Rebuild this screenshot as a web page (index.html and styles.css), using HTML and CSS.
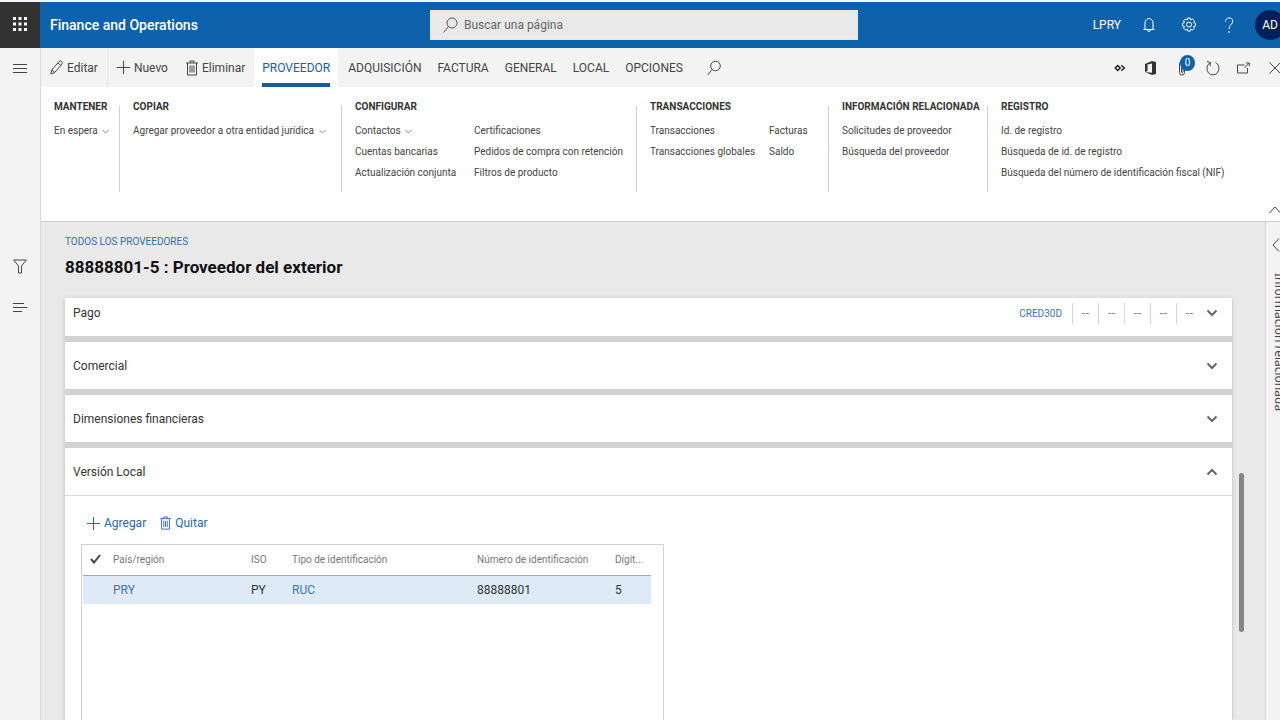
FILE: index.html
```html
<!DOCTYPE html>
<html lang="es">
<head>
    <meta charset="UTF-8">
    <title>Finance and Operations</title>
    <link rel="stylesheet" href="styles.css">
</head>
<body>
<header class="topbar">
    <button class="launcher" aria-label="Aplicaciones">
        <svg width="14" height="14" viewBox="0 0 14 14" fill="#fff"><path d="M0 0h3v3H0zM5.500 0h3v3h-3zM11 0h3v3h-3zM0 5.500h3v3H0zM5.500 5.500h3v3h-3zM11 5.500h3v3h-3zM0 11h3v3H0zM5.500 11h3v3h-3zM11 11h3v3h-3z"/></svg>
    </button>
    <div class="brand">Finance and Operations</div>
    <label class="search">
        <svg class="icon" width="15" height="16" viewBox="0 0 15 16"><circle cx="9" cy="6" r="5"/><path d="M5.500 9.500L.7 15.300"/></svg>
        <input type="text" placeholder="Buscar una página" aria-label="Buscar una página">
    </label>
    <div class="account">
        <span class="company">LPRY</span>
        <button class="top-button" aria-label="Notificaciones">
            <svg class="icon" width="14" height="16" viewBox="0 0 14 16"><path d="M1.500 12.500h11M3 12.500V6a4 4.500 0 0 1 8 0v6.500M5.500 12.500a1.500 2 0 0 0 3 0"/></svg>
        </button>
        <button class="top-button" aria-label="Configuración">
            <svg class="icon" width="16" height="16" viewBox="0 0 16 16"><path d="M6.700 1h2.600l.5 2 1.800-1 1.900 1.900-1 1.700 2 .6v2.700l-2 .5 1 1.800-1.900 1.900-1.800-1-.5 2H6.700l-.5-2-1.800 1-1.900-1.900 1-1.800-2-.5V6.200l2-.6-1-1.700L4.400 2l1.800 1z"/><circle cx="8" cy="7.600" r="2.500"/></svg>
        </button>
        <button class="top-button" aria-label="Ayuda">
            <svg class="icon" width="10" height="17" viewBox="0 0 10 17"><path d="M1.500 4.500C1.500-.3 8.700-.3 8.700 4.300 8.700 7.500 5 7.700 5 12M5 14v2"/></svg>
        </button>
        <button class="avatar">AD</button>
    </div>
</header>

<div class="workspace">
    <nav class="side-nav">
        <button aria-label="Menú"><svg class="icon" width="14" height="10" viewBox="0 0 14 10"><path d="M0 .5h14M0 4.500h14M0 8.500h14"/></svg></button>
        <button class="nav-filter" aria-label="Filtro"><svg class="icon" width="14" height="15" viewBox="0 0 14 15"><path d="M.7 1h12.600L8.500 7v7h-3V7z"/></svg></button>
        <button aria-label="Lista"><svg class="icon" width="14" height="10" viewBox="0 0 14 10"><path d="M0 .5h11M0 4.500h14M0 8.500h9"/></svg></button>
    </nav>

    <main class="main">
        <div class="action-bar">
            <button class="command edit"><svg class="icon" width="13" height="15" viewBox="0 0 13 15"><path d="M.8 14l1-4L9 1.500Q10.500.3 11.700 1.500T12 4L4.700 12.500zM1.800 10l2.900 2.500M8 3l2.900 2.500"/></svg>Editar</button>
            <button class="command"><svg class="icon" width="13" height="13" viewBox="0 0 13 13"><path d="M6.500 0v13M0 6.500h13"/></svg>Nuevo</button>
            <button class="command"><svg class="icon" width="12" height="16" viewBox="0 0 12 16"><path d="M0 3h12M4 3V1h4v2M1.500 3v12h9V3M4 5.500v7M6 5.500v7M8 5.500v7"/></svg>Eliminar</button>
            <div class="tabs">
                <button class="tab active"><span>PROVEEDOR</span></button>
                <button class="tab">ADQUISICIÓN</button>
                <button class="tab">FACTURA</button>
                <button class="tab">GENERAL</button>
                <button class="tab">LOCAL</button>
                <button class="tab">OPCIONES</button>
                <button class="tab find" aria-label="Buscar"><svg class="icon" width="14" height="16" viewBox="0 0 14 16"><circle cx="8.500" cy="6" r="4.800"/><path d="M5.200 9.500L.7 15"/></svg></button>
            </div>
            <div class="page-tools">
                <button aria-label="Power Apps"><svg class="icon apps" width="12" height="8" viewBox="0 0 12 8"><path d="M3.700 1.500L6.200 4 3.700 6.500 1.200 4zM7.300 1.200L10.300 4 7.300 6.800"/></svg></button>
                <button aria-label="Office"><svg width="11" height="14" viewBox="0 0 11 14" fill="#333"><path d="M0 3l7-3 4 1v12l-4 1-7-3 7 .8V2.400L2.500 3.500V10L0 11z"/></svg></button>
                <button class="attach" aria-label="Datos adjuntos"><svg class="icon" width="8" height="16" viewBox="0 0 8 16"><path d="M6.500 4v8.500a2.500 2.500 0 0 1-5 0v-9a1.500 1.500 0 0 1 3.500 0v8.500q-1 1.500-1.500 0V5"/></svg><span class="badge">0</span></button>
                <button aria-label="Actualizar"><svg class="icon" width="14" height="16" viewBox="0 0 14 16"><path d="M9.500 2.500A6 6.500 0 1 1 4 2.700M1 1.500l3.500 1L4 6"/></svg></button>
                <button aria-label="Abrir en ventana nueva"><svg class="icon" width="13" height="12" viewBox="0 0 13 12"><path d="M7.500 3H.5v8h10V6M7.500 6L12 1.200M9 1h3.300v3.300"/></svg></button>
                <button aria-label="Cerrar"><svg class="icon" width="12" height="12" viewBox="0 0 12 12"><path d="M.5.5l11 11M11.500.5l-11 11"/></svg></button>
            </div>
        </div>

        <div class="ribbon">
            <section class="group">
                <h2>MANTENER</h2>
                <a href="#">En espera <svg class="icon caret" width="7" height="5" viewBox="0 0 7 5"><path d="M.5 1l3 3 3-3"/></svg></a>
            </section>
            <section class="group">
                <h2>COPIAR</h2>
                <a href="#">Agregar proveedor a otra entidad jurídica <svg class="icon caret" width="7" height="5" viewBox="0 0 7 5"><path d="M.5 1l3 3 3-3"/></svg></a>
            </section>
            <section class="group two-columns">
                <h2>CONFIGURAR</h2>
                <a href="#">Contactos <svg class="icon caret" width="7" height="5" viewBox="0 0 7 5"><path d="M.5 1l3 3 3-3"/></svg></a>
                <a href="#">Certificaciones</a>
                <a href="#">Cuentas bancarias</a>
                <a href="#">Pedidos de compra con retención</a>
                <a href="#">Actualización conjunta</a>
                <a href="#">Filtros de producto</a>
            </section>
            <section class="group two-columns">
                <h2>TRANSACCIONES</h2>
                <a href="#">Transacciones</a>
                <a href="#">Facturas</a>
                <a href="#">Transacciones globales</a>
                <a href="#">Saldo</a>
            </section>
            <section class="group">
                <h2>INFORMACIÓN RELACIONADA</h2>
                <a href="#">Solicitudes de proveedor</a>
                <a href="#">Búsqueda del proveedor</a>
            </section>
            <section class="group">
                <h2>REGISTRO</h2>
                <a href="#">Id. de registro</a>
                <a href="#">Búsqueda de id. de registro</a>
                <a href="#">Búsqueda del número de identificación fiscal (NIF)</a>
            </section>
            <button class="collapse" aria-label="Contraer"><svg class="icon" width="12" height="8" viewBox="0 0 12 8"><path d="M.5 7L6 1l5.500 6"/></svg></button>
        </div>

        <div class="page">
            <div class="record">
                <a class="breadcrumb" href="#">TODOS LOS PROVEEDORES</a>
                <h1>88888801-5 : Proveedor del exterior</h1>

                <div class="sections">
                    <section class="card">
                        <button class="card-header first">
                            <span>Pago</span>
                            <span class="summary"><b>CRED30D</b><i>--</i><i>--</i><i>--</i><i>--</i><i>--</i></span>
                            <svg class="icon chevron" width="12" height="8" viewBox="0 0 12 8"><path d="M1.500 1.500L6 6l4.500-4.500"/></svg>
                        </button>
                    </section>
                    <section class="card">
                        <button class="card-header">
                            <span>Comercial</span>
                            <svg class="icon chevron" width="12" height="8" viewBox="0 0 12 8"><path d="M1.500 1.500L6 6l4.500-4.500"/></svg>
                        </button>
                    </section>
                    <section class="card">
                        <button class="card-header">
                            <span>Dimensiones financieras</span>
                            <svg class="icon chevron" width="12" height="8" viewBox="0 0 12 8"><path d="M1.500 1.500L6 6l4.500-4.500"/></svg>
                        </button>
                    </section>
                    <section class="card open">
                        <button class="card-header">
                            <span>Versión Local</span>
                            <svg class="icon chevron" width="12" height="8" viewBox="0 0 12 8"><path d="M1.500 6.500L6 2l4.500 4.500"/></svg>
                        </button>
                        <div class="card-body">
                            <div class="grid-actions">
                                <button><svg class="icon" width="13" height="13" viewBox="0 0 13 13"><path d="M6.500 0v13M0 6.500h13"/></svg>Agregar</button>
                                <button><svg class="icon" width="11" height="14" viewBox="0 0 12 16"><path d="M0 3h12M4 3V1h4v2M1.500 3v12h9V3M4 5.500v7M6 5.500v7M8 5.500v7"/></svg>Quitar</button>
                            </div>
                            <div class="grid-box">
                                <table>
                                    <colgroup><col class="col-check"><col class="col-country"><col class="col-iso"><col class="col-type"><col class="col-number"><col></colgroup>
                                    <thead>
                                    <tr>
                                        <th><svg class="icon check" width="11" height="10" viewBox="0 0 11 10"><path d="M1 5l3 3.500L10 1"/></svg></th>
                                        <th>País/región</th>
                                        <th>ISO</th>
                                        <th>Tipo de identificación</th>
                                        <th>Número de identificación</th>
                                        <th>Dígit...</th>
                                    </tr>
                                    </thead>
                                    <tbody>
                                    <tr>
                                        <td></td>
                                        <td><a href="#">PRY</a></td>
                                        <td>PY</td>
                                        <td><a href="#">RUC</a></td>
                                        <td>88888801</td>
                                        <td>5</td>
                                    </tr>
                                    </tbody>
                                </table>
                            </div>
                        </div>
                    </section>
                </div>
            </div>
            <div class="scroll-track"><div class="scroll-thumb"></div></div>
            <aside class="related">
                <button aria-label="Expandir"><svg class="icon" width="8" height="14" viewBox="0 0 8 14"><path d="M7 .5L1 7l6 6.500"/></svg></button>
                <span>Información relacionada</span>
            </aside>
        </div>
    </main>
</div>
</body>
</html>
```
FILE: styles.css
```css
* {
    box-sizing: border-box;
}

body {
    margin: 0;
    height: 100vh;
    display: flex;
    flex-direction: column;
    overflow: hidden;
    border-top: 2px solid #f4f8fb;
    background-color: #e9e9e9;
    color: #444;
    font-family: Roboto, "Liberation Sans", sans-serif;
    font-size: 12px;
}

button {
    padding: 0;
    border: none;
    background: none;
    color: inherit;
    font: inherit;
    cursor: pointer;
}

a {
    color: inherit;
    text-decoration: none;
}

.icon {
    flex: none;
    fill: none;
    stroke: currentColor;
    stroke-width: 1;
}

/* top bar */
.topbar {
    flex: none;
    display: grid;
    grid-template-columns: 40px 390px 428px 1fr;
    align-items: center;
    height: 46px;
    background-color: #0e62ab;
    color: #fff;
}

.launcher {
    height: 46px;
    background-color: #323232;
}

.brand {
    padding-left: 10px;
    font-size: 14px;
    font-weight: 500;
}

.search {
    display: flex;
    align-items: center;
    gap: 4px;
    height: 30px;
    padding: 0 12px;
    border: 1px solid #dfe9f2;
    background-color: #e9e9e9;
    color: #555;
}

.search input {
    flex: 1;
    border: none;
    background: none;
    font: inherit;
    outline: none;
}

.search input::placeholder {
    color: #666;
}

.account {
    display: flex;
    align-items: center;
    justify-content: flex-end;
    margin-right: -5px;
}

.company {
    margin-right: 8px;
}

.top-button {
    display: flex;
    align-items: center;
    justify-content: center;
    width: 40px;
    height: 40px;
}

.avatar {
    flex: none;
    width: 30px;
    height: 30px;
    margin-left: 6px;
    border-radius: 50%;
    background-color: #00205b;
}

/* left navigation */
.workspace {
    flex: 1;
    display: flex;
    min-height: 0;
}

.side-nav {
    flex: none;
    display: flex;
    flex-direction: column;
    width: 41px;
    border-right: 1px solid #d8d8d8;
    background-color: #f3f3f3;
}

.side-nav button {
    display: flex;
    align-items: center;
    justify-content: center;
    height: 42px;
}

.side-nav .nav-filter {
    margin-top: 155px;
}

.main {
    flex: 1;
    display: flex;
    flex-direction: column;
    min-width: 0;
}

/* action bar */
.action-bar {
    flex: none;
    display: flex;
    height: 39px;
    background-color: #f3f3f3;
}

.command {
    display: flex;
    align-items: center;
    gap: 4px;
    padding: 0 9px;
}

.command.edit {
    border-right: 1px solid #e4e4e4;
}

.tabs {
    display: flex;
}

.tab {
    display: flex;
    align-items: center;
    padding: 0 8px;
}

.tab.active {
    margin-right: 2px;
    background-color: #fff;
    color: #1a5fa5;
}

.tab.active span {
    height: 39px;
    border-bottom: 4px solid #1a5a9a;
    line-height: 41px;
}

.tab.find {
    padding-left: 16px;
}

.page-tools {
    display: flex;
    margin-left: auto;
    margin-right: -10px;
}

.page-tools button {
    position: relative;
    display: flex;
    align-items: center;
    justify-content: center;
    width: 31px;
}

.page-tools .apps {
    stroke: #222;
    stroke-width: 1.5;
}

.badge {
    position: absolute;
    top: 7px;
    left: 14px;
    width: 15px;
    height: 16px;
    border-radius: 50%;
    background-color: #0e62ab;
    color: #fff;
    font-size: 10px;
    line-height: 16px;
}

/* ribbon groups */
.ribbon {
    position: relative;
    flex: none;
    display: grid;
    grid-template-columns: 79px 222px 295px 192px 159px 1fr;
    height: 135px;
    padding-top: 19px;
    border-bottom: 1px solid #cfcfcf;
    background-color: #fff;
}

.group {
    display: grid;
    grid-template-columns: 100%;
    grid-template-rows: 14px;
    grid-auto-rows: 21px;
    align-content: start;
    height: 86px;
    padding-left: 13px;
    border-right: 1px solid #d0d0d0;
    font-size: 10px;
    white-space: nowrap;
}

.group:nth-child(6) {
    border-right: none;
}

.group.two-columns {
    grid-template-columns: 119px 1fr;
}

.group h2 {
    grid-column: 1 / -1;
    margin: -8px 0 0;
    color: #333;
    font-size: 10px;
    line-height: 18px;
}

.group a {
    line-height: 22px;
}

.caret {
    margin-left: 2px;
    stroke: #888;
}

.collapse {
    position: absolute;
    right: -1px;
    bottom: 4px;
}

/* record page */
.page {
    flex: 1;
    display: flex;
    min-height: 0;
}

.record {
    flex: 1;
    display: flex;
    flex-direction: column;
    padding: 12px 0 0 24px;
}

.breadcrumb {
    color: #3b6ea5;
    font-size: 10px;
    line-height: 16px;
}

h1 {
    margin: 5px 0 19px;
    color: #111;
    font-size: 17px;
    line-height: 24px;
}

.sections {
    flex: 1;
    display: flex;
    flex-direction: column;
    gap: 6px;
    background-color: #d2d2d2;
    box-shadow: 0 1px 4px #bbb;
}

.card {
    background-color: #fff;
}

.card.open {
    flex: 1;
}

.card-header {
    display: flex;
    align-items: center;
    justify-content: space-between;
    width: 100%;
    height: 47px;
    padding: 0 14px 0 8px;
    color: #333;
}

.card-header.first {
    height: 38px;
    padding-bottom: 8px;
}

.chevron {
    stroke: #666;
    stroke-width: 2;
}

.summary {
    display: flex;
    align-items: center;
    margin-left: auto;
    padding-right: 4px;
    font-size: 10px;
    line-height: 21px;
}

.summary b {
    padding-right: 10px;
    color: #3a74b8;
    font-weight: normal;
}

.summary i {
    width: 26px;
    border-left: 1px solid #d5d5d5;
    color: #888;
    font-family: "Liberation Sans", sans-serif;
    font-size: 12px;
    font-style: normal;
}

.card-body {
    display: flex;
    flex-direction: column;
    height: calc(100% - 47px);
    padding: 16px 16px 0;
    border-top: 1px solid #d8d8d8;
}

.grid-actions {
    display: flex;
    gap: 14px;
    height: 32px;
    padding-left: 6px;
    color: #2a66a8;
}

.grid-actions button {
    display: flex;
    align-items: center;
    gap: 4px;
    height: 22px;
}

.grid-box {
    flex: 1;
    width: 583px;
    padding: 0 12px 0 1px;
    border: 1px solid #d2d2d2;
    border-bottom: none;
}

table {
    width: 100%;
    table-layout: fixed;
    border-collapse: collapse;
    text-align: left;
}

th {
    height: 30px;
    padding: 0;
    border-bottom: 1px solid #a8a8a8;
    color: #777;
    font-size: 10px;
    font-weight: normal;
}

th:first-child {
    padding-left: 7px;
}

td {
    height: 29px;
    padding: 0;
    background-color: #deebf7;
    color: #333;
}

td a {
    color: #3a74b8;
}

.check {
    stroke: #444;
    stroke-width: 2;
}

.col-check {
    width: 30px;
}

.col-country {
    width: 138px;
}

.col-iso {
    width: 41px;
}

.col-type {
    width: 185px;
}

.col-number {
    width: 138px;
}

.scroll-track {
    flex: none;
    width: 33px;
    padding: 251px 0 0 7px;
}

.scroll-thumb {
    width: 5px;
    height: 159px;
    border-radius: 3px;
    background-color: #858585;
}

.related {
    flex: none;
    display: flex;
    flex-direction: column;
    align-items: flex-start;
    width: 15px;
    padding: 16px 0 0 6px;
    border-left: 1px solid #d5d5d5;
    background-color: #f3f3f3;
}

.related button {
    height: 14px;
}

.related span {
    margin-top: 21px;
    font-family: "Noto Sans", sans-serif;
    line-height: 14px;
    white-space: nowrap;
    writing-mode: vertical-rl;
}
```
